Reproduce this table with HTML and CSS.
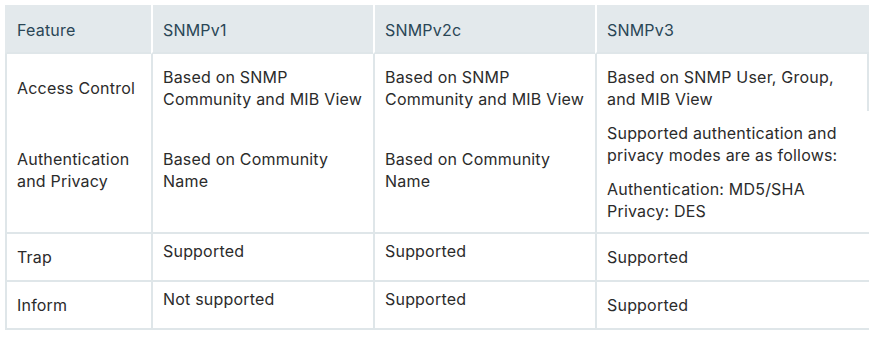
FILE: index.html
```html
<!DOCTYPE html>
<html lang="en">
<head>
<meta charset="utf-8">
<title>SNMP versions</title>
<link rel="stylesheet" href="styles.css">
</head>
<body>
<table class="cmp">
  <thead>
    <tr>
      <th class="c1">Feature</th>
      <th class="c2">SNMPv1</th>
      <th class="c3">SNMPv2c</th>
      <th class="c4">SNMPv3</th>
    </tr>
  </thead>
  <tbody>
    <tr class="r-access">
      <td>Access Control</td>
      <td>Based on SNMP<br>Community and MIB View</td>
      <td>Based on SNMP<br>Community and MIB View</td>
      <td class="last">Based on SNMP User, Group,<br>and MIB View</td>
    </tr>
    <tr class="r-auth">
      <td>Authentication<br>and Privacy</td>
      <td>Based on Community<br>Name</td>
      <td>Based on Community<br>Name</td>
      <td class="v3"><p>Supported authentication and<br>privacy modes are as follows:</p><p>Authentication: MD5/SHA<br>Privacy: DES</p></td>
    </tr>
    <tr class="r-plain">
      <td>Trap</td>
      <td class="up">Supported</td>
      <td class="up">Supported</td>
      <td>Supported</td>
    </tr>
    <tr class="r-plain">
      <td>Inform</td>
      <td class="up">Not supported</td>
      <td class="up">Supported</td>
      <td>Supported</td>
    </tr>
  </tbody>
</table>
</body>
</html>
```
FILE: styles.css
```css
html, body {
  margin: 0;
  padding: 0;
  background: #ffffff;
}

.cmp {
  margin: 5px 0 0 5px;
  width: 864px;
  table-layout: fixed;
  border-collapse: separate;
  border-spacing: 0;
  font-family: Inter, "Liberation Sans", sans-serif;
  font-size: 16px;
  line-height: 22px;
  letter-spacing: 0.2px;
  color: #2b2b2b;
}

.cmp th,
.cmp td {
  box-sizing: border-box;
  text-align: left;
  font-weight: normal;
}

.cmp th {
  background: #e3e9ec;
  color: #2a4656;
  padding: 14px 10px 11px;
  border-left: 2px solid #ffffff;
  border-bottom: 2px solid #dfe6e9;
  vertical-align: middle;
}

.cmp th.c1 { width: 146px; border-left-color: #e3e9ec; }
.cmp th.c2 { width: 222px; }
.cmp th.c3 { width: 222px; }
.cmp th.c4 { width: 274px; }

.cmp td {
  border-left: 2px solid #dfe6e9;
  vertical-align: middle;
  padding: 12px 10px;
}

.r-access td {
  padding: 12px 10px 1px;
}

.r-access td.last {
  border-right: 2px solid #dfe6e9;
}

.r-auth td {
  padding: 11px 10px 15px;
  border-bottom: 2px solid #dfe6e9;
}

.r-auth td.v3 {
  padding-bottom: 10px;
}

.v3 p {
  margin: 0 0 12px;
}

.v3 p:last-child {
  margin-bottom: 0;
}

.r-plain td {
  border-bottom: 2px solid #dfe6e9;
}

.r-plain td.up {
  padding: 6px 10px 18px;
}
```
